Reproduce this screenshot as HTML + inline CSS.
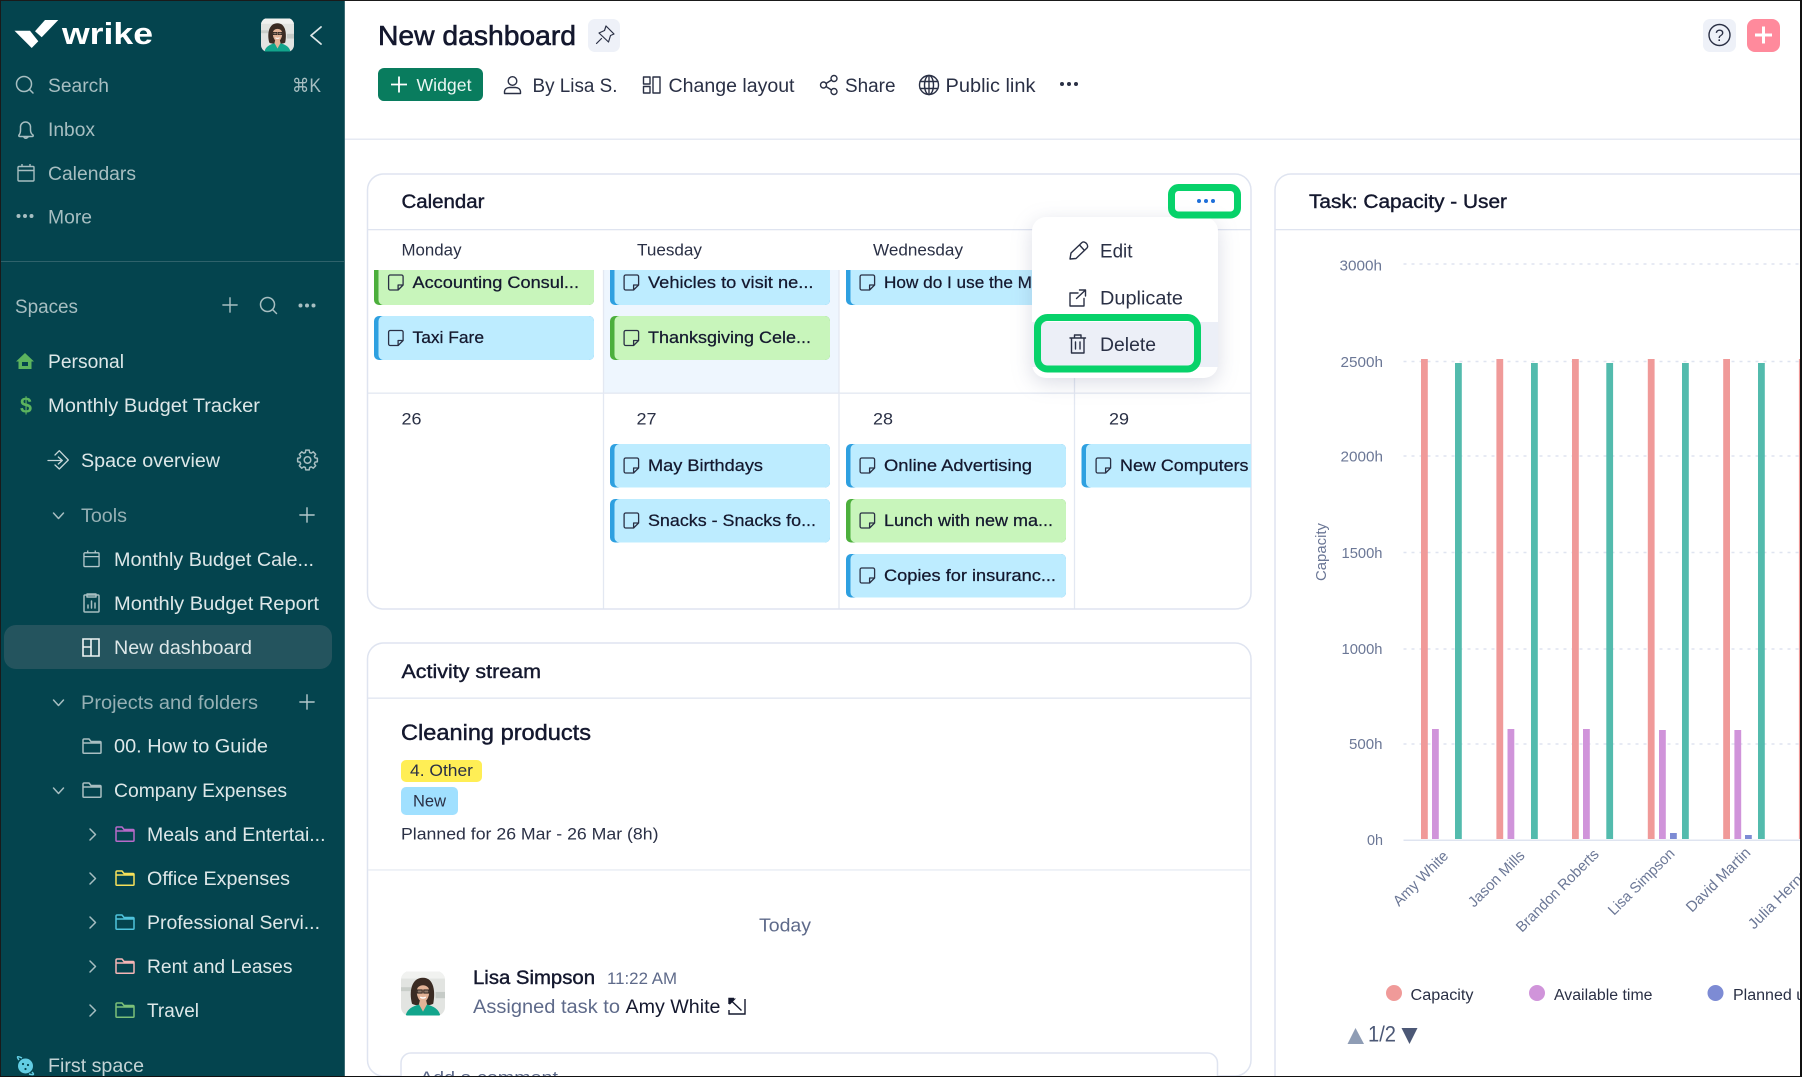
<!DOCTYPE html>
<html lang="en"><head><meta charset="utf-8"><title>New dashboard</title>
<style>
html,body{margin:0;padding:0;background:#fff;overflow:hidden}
svg{display:block;font-family:"Liberation Sans",sans-serif}
.s{font-size:19px;fill:#a7bec1}
.l{font-size:19px;fill:#dde7e8}
.d{font-size:19px;fill:#96b0b4}
.t{font-size:19px;fill:#2a3045}
.e{font-size:17px;fill:#14182e;stroke:#14182e;stroke-width:.25}
.c{font-size:16.5px;fill:#2a3045}
.h{font-size:19px;fill:#14182e;stroke:#14182e;stroke-width:.4}
.a{font-size:15px;fill:#6b7796}
.i{fill:none;stroke:#a7bec1;stroke-width:1.5;stroke-linecap:round;stroke-linejoin:round}
.w{fill:none;stroke:#c6d6d8;stroke-width:1.3;stroke-linecap:round;stroke-linejoin:round}
.k{fill:none;stroke:#2a3045;stroke-width:1.4;stroke-linecap:round;stroke-linejoin:round}
.g{stroke:#dfe4f0;stroke-width:1.5;stroke-dasharray:3 5}
</style></head><body>
<svg width="1802" height="1077" viewBox="0 0 1802 1077" xmlns="http://www.w3.org/2000/svg">
<defs>
<symbol id="note" viewBox="0 0 17 17"><path d="M2.7 1H14a1.6 1.6 0 0 1 1.6 1.6V11L10.6 16H2.7A1.6 1.6 0 0 1 1.100 14.400V2.600A1.600 1.600 0 0 1 2.700 1ZM15.600 11H10.600V16" fill="none" stroke="#2a3045" stroke-width="1.3" stroke-linejoin="round"/></symbol>
<symbol id="fold" viewBox="0 0 20 16"><path d="M1 14.500V2.200Q1 1 2.200 1H7L9 3.500H18Q19 3.500 19 4.500V14.500Q19 15.200 18 15.200H2Q1 15.200 1 14.500ZM1 5H19" fill="none" stroke="currentColor" stroke-width="1.500" stroke-linejoin="round"/></symbol>
<symbol id="plus" viewBox="0 0 18 18"><path d="M9 1V17M1 9H17" fill="none" stroke="currentColor" stroke-width="1.600" stroke-linecap="round"/></symbol>
<symbol id="cal" viewBox="0 0 18 19"><path d="M2 3.500H16A1 1 0 0 1 17 4.500V17A1 1 0 0 1 16 18H2A1 1 0 0 1 1 17V4.500A1 1 0 0 1 2 3.500ZM1 7.500H17M5 1V3.500M13 1V3.500" fill="none" stroke="currentColor" stroke-width="1.400"/></symbol>
<symbol id="face" viewBox="0 0 56 56">
<rect width="56" height="56" fill="#e2e4e1"/>
<rect x="0" y="0" width="56" height="9" fill="#f1f2f0"/>
<rect x="0" y="20" width="13" height="5" fill="#c9cec9"/>
<rect x="44" y="26" width="12" height="8" fill="#c6cbc7"/>
<path d="M14 41C10 26 13 8 28 8C42 8 44 26 41 41C37 44 18 44 14 41Z" fill="#3a2b23"/>
<path d="M20 25C20 15 36 15 36 25C36 33 32 39 28 39C24 39 20 33 20 25Z" fill="#e2b397"/>
<path d="M24 37H32L34 45L28 51L22 45Z" fill="#e2b397"/>
<path d="M20.500 23.500H27V27.500H20.500ZM29 23.500H35.500V27.500H29Z" fill="#8d7768" stroke="#1b1512" stroke-width="1.100"/>
<path d="M24.500 32.500Q28 35 31.500 32.500" stroke="#fff" stroke-width="1.800" fill="none"/>
<path d="M6 56C8 47 16 44 23 42L28 51L33 42C40 44 48 47 50 56Z" fill="#12a58c"/>
</symbol>
<clipPath id="av1"><rect x="261" y="18" width="33" height="34" rx="7"/></clipPath>
<clipPath id="av2"><rect x="401" y="971" width="44" height="45" rx="9"/></clipPath>
<clipPath id="r1"><rect x="368" y="270" width="880" height="120"/></clipPath>
<clipPath id="calclip"><rect x="368" y="174" width="883" height="435" rx="16"/></clipPath>
</defs>

<rect width="1802" height="1077" fill="#fff"/>

<!-- sidebar -->
<rect x="0" y="0" width="344" height="1077" fill="#04444e"/>
<rect x="344" y="0" width="1" height="1077" fill="#3d6b73"/>
<path d="M14.500 30.700H30L38.300 41.300L31.700 48Z" fill="#fff"/>
<path d="M45 20H58.300L41.700 37.300L35 31.300Z" fill="#fff"/>
<text x="62" y="44" font-size="31" font-weight="700" fill="#fff" textLength="91" lengthAdjust="spacingAndGlyphs">wrike</text>
<g clip-path="url(#av1)"><use href="#face" x="261" y="18" width="33" height="34"/></g>
<path d="M321 27L311 35.500L321 44" fill="none" stroke="#dde7e8" stroke-width="1.800" stroke-linecap="round" stroke-linejoin="round"/>

<circle cx="24" cy="84" r="7.500" class="i"/><path d="M29.500 89.500L33 93" class="i"/>
<text x="48" y="92" class="s" textLength="61" lengthAdjust="spacingAndGlyphs">Search</text>
<text x="292" y="92" class="s" textLength="29" lengthAdjust="spacingAndGlyphs" style="font-family:'Liberation Sans','DejaVu Sans',sans-serif">⌘K</text>

<path d="M19 135C21 133 20.500 130 20.500 127A5 5 0 0 1 30.500 127C30.500 130 30 133 33 135C33.500 136 33 136.500 32 136.500H20C19 136.500 18.500 136 19 135ZM23.500 136.500Q25.500 140 28.500 136.500" class="i"/>
<text x="48" y="136" class="s" textLength="47" lengthAdjust="spacingAndGlyphs">Inbox</text>
<use href="#cal" x="17" y="163" width="18" height="19" color="#a7bec1"/>
<text x="48" y="180" class="s" textLength="88" lengthAdjust="spacingAndGlyphs">Calendars</text>
<g fill="#a7bec1"><circle cx="18.500" cy="216" r="2"/><circle cx="25" cy="216" r="2"/><circle cx="31.500" cy="216" r="2"/></g>
<text x="48" y="223.500" class="s" textLength="44" lengthAdjust="spacingAndGlyphs">More</text>

<rect x="1" y="261" width="343" height="1" fill="#2f626b"/>

<text x="15" y="313" class="s" textLength="63" lengthAdjust="spacingAndGlyphs">Spaces</text>
<use href="#plus" x="222" y="297" width="16" height="16" color="#a7bec1"/>
<circle cx="267.500" cy="304.500" r="7" class="i"/><path d="M272.500 309.500L276.500 313.500" class="i"/>
<g fill="#a7bec1"><circle cx="300.500" cy="305.500" r="2"/><circle cx="307" cy="305.500" r="2"/><circle cx="313.500" cy="305.500" r="2"/></g>

<path d="M25 353L34 361.500H31.500V369H18.500V361.500H16Z" fill="#5cb45e"/><rect x="22" y="362" width="6" height="4" fill="#04444e"/>
<text x="48" y="368" class="l" textLength="76" lengthAdjust="spacingAndGlyphs">Personal</text>
<text x="20" y="413" font-size="22" font-weight="700" fill="#5cb45e" textLength="12" lengthAdjust="spacingAndGlyphs">$</text>
<text x="48" y="412" class="l" textLength="212" lengthAdjust="spacingAndGlyphs">Monthly Budget Tracker</text>

<path d="M48 460.500H62.300M58.300 457L62.300 460.500L58.300 464M55 455L59.300 450.700L68.300 460L59.300 469L55 465" class="w"/>
<text x="81" y="467" class="l" textLength="139" lengthAdjust="spacingAndGlyphs">Space overview</text>
<circle cx="307.500" cy="460" r="3.300" class="i" stroke-width="1.300"/>
<path d="M305.760 450.150L309.240 450.150L309.650 452.500L311.280 453.180L313.240 451.810L315.690 454.260L314.320 456.220L315 457.850L317.350 458.260L317.350 461.740L315 462.150L314.320 463.780L315.690 465.740L313.240 468.190L311.280 466.820L309.650 467.500L309.240 469.850L305.760 469.850L305.350 467.500L303.720 466.820L301.760 468.190L299.310 465.740L300.680 463.780L300 462.150L297.650 461.740L297.650 458.260L300 457.850L300.680 456.220L299.310 454.260L301.760 451.810L303.720 453.180L305.350 452.500Z" class="i" stroke-width="1.300"/>

<path d="M53.500 513L58.500 518.500L63.500 513" class="i" stroke-width="1.300"/>
<text x="81" y="522" class="d" textLength="46" lengthAdjust="spacingAndGlyphs">Tools</text>
<use href="#plus" x="299" y="507" width="16" height="16" color="#b4c8cb"/>

<use href="#cal" x="83" y="549" width="17" height="19" color="#b4c8cb"/>
<text x="114" y="566" class="l" textLength="200" lengthAdjust="spacingAndGlyphs">Monthly Budget Cale...</text>
<path d="M85 595H98A1 1 0 0 1 99 596V611A1 1 0 0 1 98 612H85A1 1 0 0 1 84 611V596A1 1 0 0 1 85 595ZM87 594V597H96V594ZM88 608V605M91.500 608V601M95 608V603" class="i" stroke="#b4c8cb" stroke-width="1.300"/>
<text x="114" y="610" class="l" textLength="205" lengthAdjust="spacingAndGlyphs">Monthly Budget Report</text>

<rect x="4" y="625" width="328" height="44" rx="12" fill="#24545e"/>
<path d="M83 639H99V656H83ZM91 639V656M83 647H91" fill="none" stroke="#eef4f4" stroke-width="1.600"/>
<text x="114" y="654" class="l" textLength="138" lengthAdjust="spacingAndGlyphs">New dashboard</text>

<path d="M53.500 700L58.500 705.500L63.500 700" class="i" stroke-width="1.300"/>
<text x="81" y="709" class="d" textLength="177" lengthAdjust="spacingAndGlyphs">Projects and folders</text>
<use href="#plus" x="299" y="694" width="16" height="16" color="#b4c8cb"/>

<use href="#fold" x="82" y="738" width="20" height="16" color="#a9bec1"/>
<text x="114" y="752.500" class="l" textLength="154" lengthAdjust="spacingAndGlyphs">00. How to Guide</text>
<path d="M53.500 788L58.500 793.500L63.500 788" class="i" stroke-width="1.300"/>
<use href="#fold" x="82" y="782" width="20" height="16" color="#a9bec1"/>
<text x="114" y="797" class="l" textLength="173" lengthAdjust="spacingAndGlyphs">Company Expenses</text>

<g class="i" stroke-width="1.300">
<path d="M90 829L95.500 834.500L90 840"/><path d="M90 873L95.500 878.500L90 884"/><path d="M90 917L95.500 922.500L90 928"/><path d="M90 961L95.500 966.500L90 972"/><path d="M90 1005L95.500 1010.500L90 1016"/>
</g>
<use href="#fold" x="115" y="826" width="20" height="16" color="#b76ac9"/>
<text x="147" y="841" class="l" textLength="178.500" lengthAdjust="spacingAndGlyphs">Meals and Entertai...</text>
<use href="#fold" x="115" y="870" width="20" height="16" color="#f6e15a"/>
<text x="147" y="885" class="l" textLength="143" lengthAdjust="spacingAndGlyphs">Office Expenses</text>
<use href="#fold" x="115" y="914" width="20" height="16" color="#4fc3dc"/>
<text x="147" y="929" class="l" textLength="173" lengthAdjust="spacingAndGlyphs">Professional Servi...</text>
<use href="#fold" x="115" y="958" width="20" height="16" color="#f4b5b5"/>
<text x="147" y="973" class="l" textLength="145.500" lengthAdjust="spacingAndGlyphs">Rent and Leases</text>
<use href="#fold" x="115" y="1002" width="20" height="16" color="#7cc078"/>
<text x="147" y="1017" class="l" textLength="52" lengthAdjust="spacingAndGlyphs">Travel</text>

<circle cx="25.500" cy="1066" r="7.500" fill="#62cde3"/>
<path d="M19 1060C16 1056 18 1056 22 1058M32 1072C35 1075 33 1075 29 1074" stroke="#62cde3" stroke-width="1.500" fill="none"/>
<circle cx="23" cy="1064" r="1.100" fill="#04444e"/><circle cx="28" cy="1065" r="1.100" fill="#04444e"/><circle cx="25.500" cy="1069" r="1.100" fill="#04444e"/>
<text x="48" y="1072" class="s" textLength="96" lengthAdjust="spacingAndGlyphs" style="fill:#c3d3d5">First space</text>

<!-- header -->
<text x="378" y="45" font-size="28" fill="#14182e" stroke="#14182e" stroke-width=".6" textLength="198" lengthAdjust="spacingAndGlyphs">New dashboard</text>
<rect x="588" y="19" width="32" height="33" rx="7" fill="#eef1f8"/>
<path d="M606 26L614 34L610.500 35.500L608.500 42L599 33L604.500 30.500ZM601.500 38.500L596.500 43.500" fill="none" stroke="#2a3045" stroke-width="1.200" stroke-linejoin="round" stroke-linecap="round"/>
<rect x="1703" y="19" width="33" height="33" rx="7" fill="#eef1f8"/>
<circle cx="1719.500" cy="35" r="10.500" fill="none" stroke="#2a3045" stroke-width="1.400"/>
<text x="1715" y="41" font-size="17" fill="#2a3045" textLength="9" lengthAdjust="spacingAndGlyphs">?</text>
<rect x="1747" y="19" width="33" height="33" rx="8" fill="#ff8a9c"/>
<path d="M1763.500 26.500V43.500M1755 35H1772" stroke="#fff" stroke-width="3" fill="none"/>

<rect x="378" y="68" width="105" height="33" rx="6" fill="#097c5e"/>
<path d="M399 76.500V92.500M391 84.500H407" stroke="#fff" stroke-width="1.800" fill="none"/>
<text x="416.500" y="91" font-size="17.500" fill="#eaf6f2" textLength="55" lengthAdjust="spacingAndGlyphs">Widget</text>

<circle cx="512.500" cy="81" r="4.300" class="k" stroke-width="1.300"/>
<path d="M504.500 93.500V92C504.500 89 507 87.500 509.500 87.500H515.500C518 87.500 520.500 89 520.500 92V93.500Z" class="k" stroke-width="1.300"/>
<text x="532.500" y="92" class="t" textLength="85" lengthAdjust="spacingAndGlyphs">By Lisa S.</text>
<path d="M643.500 77H650V84H643.500ZM643.500 86.500H650V93H643.500ZM653 77H660V93H653Z" class="k" stroke-width="1.300"/>
<text x="668.500" y="92" class="t" textLength="126" lengthAdjust="spacingAndGlyphs">Change layout</text>
<circle cx="823.500" cy="85" r="3" class="k" stroke-width="1.300"/><circle cx="834" cy="78.500" r="3" class="k" stroke-width="1.300"/><circle cx="834" cy="91.500" r="3" class="k" stroke-width="1.300"/>
<path d="M826 83.500L831.500 80M826 86.500L831.500 90" class="k" stroke-width="1.300"/>
<text x="845" y="92" class="t" textLength="50.500" lengthAdjust="spacingAndGlyphs">Share</text>
<circle cx="929" cy="85" r="9.500" class="k" stroke-width="1.300"/><ellipse cx="929" cy="85" rx="4.500" ry="9.500" class="k" stroke-width="1.300"/>
<path d="M920 81.500H938M920 88.500H938M929 75.500V94.500" class="k" stroke-width="1.100"/>
<text x="945.500" y="92" class="t" textLength="90" lengthAdjust="spacingAndGlyphs">Public link</text>
<g fill="#2a3045"><circle cx="1062" cy="84" r="2"/><circle cx="1069" cy="84" r="2"/><circle cx="1076" cy="84" r="2"/></g>
<rect x="345" y="138.500" width="1456" height="1.500" fill="#e6eaf3"/>

<!-- calendar card -->
<rect x="603.500" y="270" width="236" height="123" fill="#eef6fe"/>
<path d="M603.500 230V609M839 230V609M1074.500 230V609" stroke="#e3e8f2" stroke-width="1.300" fill="none"/>
<rect x="368" y="229.500" width="883" height="40.500" fill="#fff"/>
<rect x="368" y="392.500" width="883" height="1.300" fill="#e3e8f2"/>
<rect x="367.500" y="174" width="883.500" height="435" rx="16" fill="none" stroke="#dfe4f0" stroke-width="1.500"/>
<rect x="368" y="229" width="883" height="1.300" fill="#dfe4f0"/>
<text x="401.500" y="208" class="h" textLength="83" lengthAdjust="spacingAndGlyphs">Calendar</text>
<text x="401.500" y="255.500" class="c" textLength="60" lengthAdjust="spacingAndGlyphs">Monday</text>
<text x="637" y="255.500" class="c" textLength="65" lengthAdjust="spacingAndGlyphs">Tuesday</text>
<text x="873" y="255.500" class="c" textLength="90" lengthAdjust="spacingAndGlyphs">Wednesday</text>

<g clip-path="url(#r1)">
<rect x="374" y="260" width="220" height="45" rx="5" fill="#4caf3c"/><rect x="378.500" y="260" width="215.500" height="45" rx="5" fill="#c8f5bb"/>
<rect x="610" y="260" width="220" height="45" rx="5" fill="#2ea0e0"/><rect x="614.500" y="260" width="215.500" height="45" rx="5" fill="#bdecff"/>
<rect x="846" y="260" width="220" height="45" rx="5" fill="#2ea0e0"/><rect x="850.500" y="260" width="215.500" height="45" rx="5" fill="#bdecff"/>
</g>
<use href="#note" x="387.500" y="274" width="17" height="17"/><text x="412.500" y="288" class="e" textLength="166.500" lengthAdjust="spacingAndGlyphs">Accounting Consul...</text>
<use href="#note" x="623" y="274" width="17" height="17"/><text x="648" y="288" class="e" textLength="165.500" lengthAdjust="spacingAndGlyphs">Vehicles to visit ne...</text>
<use href="#note" x="859" y="274" width="17" height="17"/><text x="884" y="288" class="e" textLength="148" lengthAdjust="spacingAndGlyphs">How do I use the M</text>

<rect x="374" y="316" width="220" height="44" rx="5" fill="#2ea0e0"/><rect x="378.500" y="316" width="215.500" height="44" rx="5" fill="#bdecff"/>
<use href="#note" x="387.500" y="329.500" width="17" height="17"/><text x="412.500" y="343" class="e" textLength="71.500" lengthAdjust="spacingAndGlyphs">Taxi Fare</text>
<rect x="610" y="316" width="220" height="44" rx="5" fill="#4caf3c"/><rect x="614.500" y="316" width="215.500" height="44" rx="5" fill="#c8f5bb"/>
<use href="#note" x="623" y="329.500" width="17" height="17"/><text x="648" y="343" class="e" textLength="163" lengthAdjust="spacingAndGlyphs">Thanksgiving Cele...</text>

<g class="c"><text x="401.500" y="424.500" textLength="20" lengthAdjust="spacingAndGlyphs">26</text><text x="636.500" y="424.500" textLength="20" lengthAdjust="spacingAndGlyphs">27</text><text x="873" y="424.500" textLength="20" lengthAdjust="spacingAndGlyphs">28</text><text x="1109" y="424.500" textLength="20" lengthAdjust="spacingAndGlyphs">29</text></g>

<rect x="610" y="444" width="220" height="43.500" rx="5" fill="#2ea0e0"/><rect x="614.500" y="444" width="215.500" height="43.500" rx="5" fill="#bdecff"/>
<use href="#note" x="623" y="457" width="17" height="17"/><text x="648" y="471" class="e" textLength="115" lengthAdjust="spacingAndGlyphs">May Birthdays</text>
<rect x="610" y="499" width="220" height="43.500" rx="5" fill="#2ea0e0"/><rect x="614.500" y="499" width="215.500" height="43.500" rx="5" fill="#bdecff"/>
<use href="#note" x="623" y="512" width="17" height="17"/><text x="648" y="526" class="e" textLength="168" lengthAdjust="spacingAndGlyphs">Snacks - Snacks fo...</text>
<rect x="846" y="444" width="220" height="43.500" rx="5" fill="#2ea0e0"/><rect x="850.500" y="444" width="215.500" height="43.500" rx="5" fill="#bdecff"/>
<use href="#note" x="859" y="457" width="17" height="17"/><text x="884" y="471" class="e" textLength="148" lengthAdjust="spacingAndGlyphs">Online Advertising</text>
<rect x="846" y="499" width="220" height="43.500" rx="5" fill="#4caf3c"/><rect x="850.500" y="499" width="215.500" height="43.500" rx="5" fill="#c8f5bb"/>
<use href="#note" x="859" y="512" width="17" height="17"/><text x="884" y="526" class="e" textLength="169" lengthAdjust="spacingAndGlyphs">Lunch with new ma...</text>
<rect x="846" y="554" width="220" height="43.500" rx="5" fill="#2ea0e0"/><rect x="850.500" y="554" width="215.500" height="43.500" rx="5" fill="#bdecff"/>
<use href="#note" x="859" y="567" width="17" height="17"/><text x="884" y="581" class="e" textLength="172" lengthAdjust="spacingAndGlyphs">Copies for insuranc...</text>
<g clip-path="url(#calclip)">
<rect x="1081.500" y="444" width="175" height="43.500" rx="5" fill="#2ea0e0"/><rect x="1086" y="444" width="170" height="43.500" rx="5" fill="#bdecff"/>
<use href="#note" x="1095" y="457" width="17" height="17"/><text x="1120" y="471" class="e" textLength="128.500" lengthAdjust="spacingAndGlyphs">New Computers</text>
</g>

<!-- popup -->
<rect x="1032" y="217" width="186" height="161" rx="14" fill="#fff" style="filter:drop-shadow(0 5px 10px rgba(90,100,140,.22))"/>
<path d="M1032 322H1218V367H1032Z" fill="#eceff7"/>
<path d="M1070 259L1071 253L1082 242.500Q1084 241 1086.500 243.500Q1088.500 246 1087 248L1076 258.500ZM1079.500 245L1084.500 250.500" class="k" stroke-width="1.300"/>
<text x="1100" y="257.500" class="t" textLength="32.500" lengthAdjust="spacingAndGlyphs">Edit</text>
<path d="M1078 293H1070V306H1084V298.500M1076.500 298.500L1085 290.500M1079.500 290H1085.500V296" class="k" stroke-width="1.300"/>
<text x="1100" y="304.500" class="t" textLength="83" lengthAdjust="spacingAndGlyphs">Duplicate</text>
<path d="M1070 338H1085.500M1074.500 338V335H1081V338M1071.500 338V353H1084V338M1075.500 342V349M1080 342V349" class="k" stroke-width="1.300"/>
<text x="1100" y="351" class="t" textLength="56" lengthAdjust="spacingAndGlyphs">Delete</text>
<rect x="1037.500" y="317.500" width="160" height="51.500" rx="10" fill="none" stroke="#07d26a" stroke-width="7"/>
<rect x="1171.500" y="187.500" width="66" height="27.500" rx="7" fill="none" stroke="#07d26a" stroke-width="7"/>
<g fill="#1e6fd9"><circle cx="1199" cy="201" r="2"/><circle cx="1206" cy="201" r="2"/><circle cx="1213" cy="201" r="2"/></g>

<!-- activity card -->
<rect x="367.500" y="643" width="883.500" height="433" rx="16" fill="#fff" stroke="#dfe4f0" stroke-width="1.500"/>
<rect x="368" y="697.500" width="883" height="1.300" fill="#dfe4f0"/>
<text x="401.500" y="678" class="h" textLength="139.500" lengthAdjust="spacingAndGlyphs">Activity stream</text>
<text x="401" y="740" font-size="22.500" fill="#14182e" stroke="#14182e" stroke-width=".45" textLength="190" lengthAdjust="spacingAndGlyphs">Cleaning products</text>
<rect x="401" y="760" width="81" height="22" rx="5" fill="#ffee55"/>
<text x="410" y="776" class="c" textLength="63" lengthAdjust="spacingAndGlyphs">4. Other</text>
<rect x="401" y="787" width="57" height="28" rx="5" fill="#a0e0ff"/>
<text x="413" y="806.500" class="c" textLength="33" lengthAdjust="spacingAndGlyphs">New</text>
<text x="401" y="839.500" class="c" textLength="257.500" lengthAdjust="spacingAndGlyphs">Planned for 26 Mar - 26 Mar (8h)</text>
<rect x="368" y="869.300" width="883" height="1.300" fill="#e6ebf3"/>
<text x="759" y="931.500" font-size="18.500" fill="#5e6a8a" textLength="52" lengthAdjust="spacingAndGlyphs">Today</text>
<g clip-path="url(#av2)"><use href="#face" x="401" y="971" width="44" height="45"/></g>
<text x="473" y="984" class="h" textLength="122" lengthAdjust="spacingAndGlyphs">Lisa Simpson</text>
<text x="607" y="984" font-size="17" fill="#5e6a8a" textLength="70" lengthAdjust="spacingAndGlyphs">11:22 AM</text>
<text x="473" y="1013" font-size="19" fill="#5e6a8a" textLength="147" lengthAdjust="spacingAndGlyphs">Assigned task to</text>
<text x="625.500" y="1013" font-size="19" fill="#14182e" textLength="95" lengthAdjust="spacingAndGlyphs">Amy White</text>
<path d="M745 999V1014H729V1010M729 1004V998.500H734M731 1000.500L741.500 1010.500" fill="none" stroke="#14182e" stroke-width="1.400"/>
<path d="M729.500 998.500L736 998.500L729.500 1005Z" fill="#14182e"/>
<rect x="401" y="1053" width="816.500" height="40" rx="10" fill="#fff" stroke="#dfe4f0" stroke-width="1.500"/>
<text x="420" y="1083" font-size="17" fill="#5e6a8a" textLength="138" lengthAdjust="spacingAndGlyphs">Add a comment</text>

<!-- capacity card -->
<rect x="1275" y="174" width="560" height="920" rx="16" fill="#fff" stroke="#dfe4f0" stroke-width="1.500"/>
<rect x="1275" y="229" width="530" height="1.300" fill="#dfe4f0"/>
<text x="1309" y="208" class="h" textLength="198" lengthAdjust="spacingAndGlyphs">Task: Capacity - User</text>

<g class="g"><path d="M1403.500 264H1800M1403.500 361.500H1800M1403.500 456H1800M1403.500 552.500H1800M1403.500 649H1800M1403.500 744H1800" /></g>
<rect x="1403.500" y="839.500" width="398" height="1.500" fill="#dfe4f0"/>
<g class="a">
<text x="1339.500" y="270.500" textLength="42.500" lengthAdjust="spacingAndGlyphs">3000h</text>
<text x="1340.500" y="367" textLength="42.500" lengthAdjust="spacingAndGlyphs">2500h</text>
<text x="1340.500" y="461.500" textLength="42.500" lengthAdjust="spacingAndGlyphs">2000h</text>
<text x="1341.500" y="558" textLength="41" lengthAdjust="spacingAndGlyphs">1500h</text>
<text x="1341.500" y="654" textLength="41" lengthAdjust="spacingAndGlyphs">1000h</text>
<text x="1349" y="749" textLength="33.500" lengthAdjust="spacingAndGlyphs">500h</text>
<text x="1367" y="845" textLength="16" lengthAdjust="spacingAndGlyphs">0h</text>
<text x="1326" y="581" transform="rotate(-90 1326 581)" textLength="58" lengthAdjust="spacingAndGlyphs">Capacity</text>
</g>
<g fill="#f09a99">
<rect x="1421" y="359" width="6.800" height="480"/><rect x="1496.400" y="359" width="6.800" height="480"/><rect x="1572" y="359" width="6.800" height="480"/><rect x="1647.800" y="359" width="6.800" height="480"/><rect x="1723.200" y="359" width="6.800" height="480"/><rect x="1798.900" y="359" width="6.800" height="480"/>
</g>
<g fill="#d094da">
<rect x="1432" y="729" width="6.800" height="110"/><rect x="1507.500" y="729" width="6.800" height="110"/><rect x="1583" y="729" width="6.800" height="110"/><rect x="1659" y="730" width="6.800" height="109"/><rect x="1734.400" y="730" width="6.800" height="109"/>
</g>
<g fill="#7d8bd4"><rect x="1670" y="833" width="6.800" height="6"/><rect x="1745" y="835" width="6.800" height="4"/></g>
<g fill="#53bbad">
<rect x="1455" y="363" width="6.800" height="476"/><rect x="1531" y="363" width="6.800" height="476"/><rect x="1606.300" y="363" width="6.800" height="476"/><rect x="1682" y="363" width="6.800" height="476"/><rect x="1758" y="363" width="6.800" height="476"/>
</g>
<g class="a">
<text x="1399" y="907" transform="rotate(-45 1399 907)" textLength="71" lengthAdjust="spacingAndGlyphs">Amy White</text>
<text x="1474" y="908" transform="rotate(-45 1474 908)" textLength="73" lengthAdjust="spacingAndGlyphs">Jason Mills</text>
<text x="1522" y="933" transform="rotate(-45 1522 933)" textLength="110" lengthAdjust="spacingAndGlyphs">Brandon Roberts</text>
<text x="1614" y="916" transform="rotate(-45 1614 916)" textLength="87" lengthAdjust="spacingAndGlyphs">Lisa Simpson</text>
<text x="1692" y="913" transform="rotate(-45 1692 913)" textLength="84" lengthAdjust="spacingAndGlyphs">David Martin</text>
<text x="1754" y="930" transform="rotate(-45 1754 930)" textLength="112" lengthAdjust="spacingAndGlyphs">Julia Hernandez</text>
</g>
<circle cx="1394" cy="993" r="8" fill="#f09a99"/>
<text x="1410.500" y="1000" class="c" style="font-size:15.500px" textLength="63" lengthAdjust="spacingAndGlyphs">Capacity</text>
<circle cx="1537" cy="993" r="8" fill="#d094da"/>
<text x="1554" y="1000" class="c" style="font-size:15.500px" textLength="98.500" lengthAdjust="spacingAndGlyphs">Available time</text>
<circle cx="1715.500" cy="993" r="8" fill="#7d8bd4"/>
<text x="1733" y="1000" class="c" style="font-size:15.500px" textLength="130" lengthAdjust="spacingAndGlyphs">Planned utilization</text>
<path d="M1347.500 1044L1355.500 1028L1364 1044Z" fill="#8f9db5"/>
<text x="1368" y="1041.500" font-size="22" fill="#4c5876" textLength="28" lengthAdjust="spacingAndGlyphs">1/2</text>
<path d="M1401.500 1028H1417.500L1409.500 1044Z" fill="#4c5876"/>

<!-- frame -->
<rect x="0" y="0" width="1802" height="1" fill="#1a1a1a"/>
<rect x="0" y="0" width="1" height="1077" fill="#1a1a1a"/>
<rect x="1800" y="0" width="2" height="1077" fill="#111"/>
<rect x="0" y="1076" width="1802" height="1" fill="#111"/>
</svg>
</body></html>
